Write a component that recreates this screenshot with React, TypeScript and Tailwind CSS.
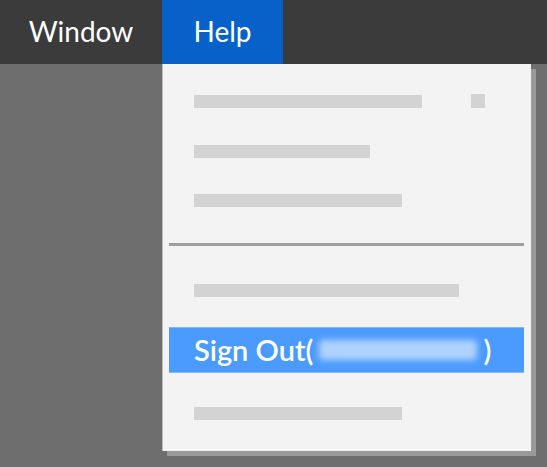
import React from "react";

const font = { fontFamily: "Lato, 'Open Sans', sans-serif" };

function Bar({ w }: { w: string }) {
  return <div className={`h-[13px] bg-[#d3d3d3] ${w}`} />;
}

export default function App() {
  return (
    <div className="h-[467px] w-full overflow-hidden bg-[#6e6e6e]" style={font}>
      {/* menu bar */}
      <div className="flex h-[64px] bg-[#3b3b3b] text-white text-[28px]">
        <div className="flex w-[162px] items-center justify-center pb-[3px]">Window</div>
        <div className="flex w-[121px] items-center justify-center bg-[#0861c9] pb-[3px]">Help</div>
      </div>

      {/* dropdown */}
      <div className="pl-[162px]">
        <div className="h-[387px] w-[369px] border-l border-[#bdbdbd] bg-[#f3f3f3] pt-[14px] shadow-[5px_5px_0_#9a9a9a]">
          <div className="flex h-[46px] items-center pl-[31px]">
            <Bar w="w-[228px]" />
            <div className="ml-[49px] h-[14px] w-[14px] bg-[#d3d3d3]" />
          </div>
          <div className="mt-[4px] flex h-[46px] items-center pl-[31px]">
            <Bar w="w-[176px]" />
          </div>
          <div className="mt-[3px] flex h-[46px] items-center pl-[31px]">
            <Bar w="w-[208px]" />
          </div>

          <div className="ml-[6px] mr-[7px] mt-[20px] h-[3px] bg-[#9e9e9e]" />

          <div className="mt-[21px] flex h-[46px] items-center pl-[31px]">
            <Bar w="w-[265px]" />
          </div>

          <div className="ml-[6px] mr-[7px] mt-[14px] flex h-[46px] items-center border-y border-[#7fb8ff] bg-[#4b9bff] pl-[25px] text-[29px] font-semibold text-white">
            <span>Sign Out(</span>
            <span className="mx-[6px] inline-block h-[20px] w-[158px] rounded-sm bg-[#b0d2ff] blur-[3px]" />
            <span>)</span>
          </div>

          <div className="mt-[17px] flex h-[46px] items-center pl-[31px]">
            <Bar w="w-[208px]" />
          </div>
        </div>
      </div>
    </div>
  );
}
